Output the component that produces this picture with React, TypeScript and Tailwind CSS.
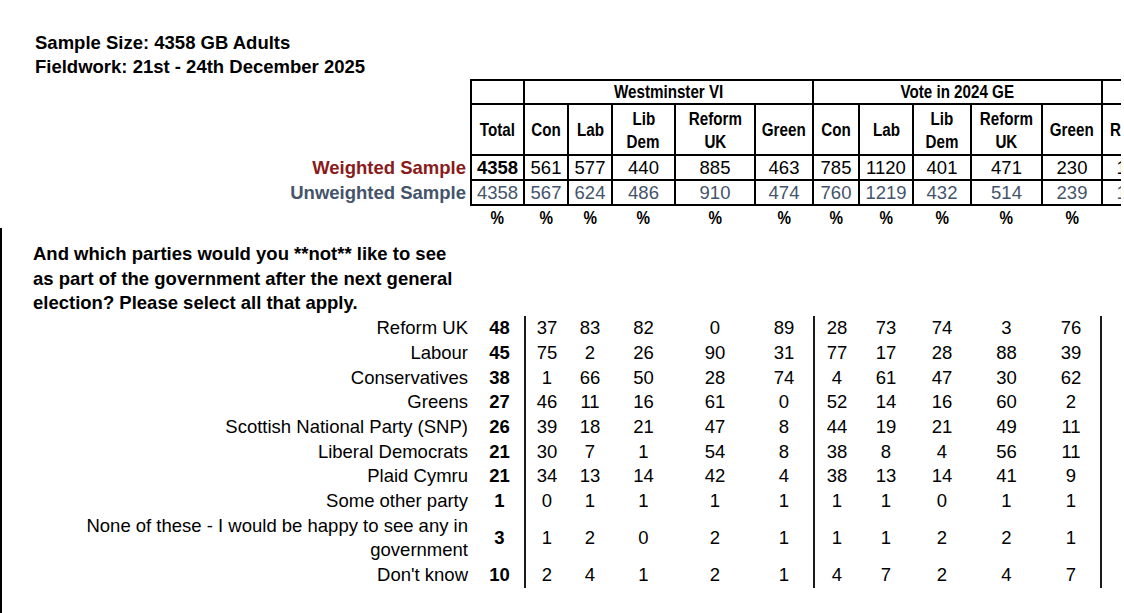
import React from 'react';

const nb = "inline-block font-bold scale-x-[0.82] origin-center";

const cols = [
  { w: 'w-[53px]', h: ['Total'], wt: '4358', uw: '4358' },
  { w: 'w-[44px]', h: ['Con'], wt: '561', uw: '567' },
  { w: 'w-[44px]', h: ['Lab'], wt: '577', uw: '624' },
  { w: 'w-[63px]', h: ['Lib', 'Dem'], wt: '440', uw: '486' },
  { w: 'w-[80px]', h: ['Reform', 'UK'], wt: '885', uw: '910' },
  { w: 'w-[58px]', h: ['Green'], wt: '463', uw: '474' },
  { w: 'w-[46px]', h: ['Con'], wt: '785', uw: '760' },
  { w: 'w-[54px]', h: ['Lab'], wt: '1120', uw: '1219' },
  { w: 'w-[58px]', h: ['Lib', 'Dem'], wt: '401', uw: '432' },
  { w: 'w-[71px]', h: ['Reform', 'UK'], wt: '471', uw: '514' },
  { w: 'w-[60px]', h: ['Green'], wt: '230', uw: '239' },
  { w: 'w-[70px]', h: ['Remain'], wt: '1612', uw: '1650' },
  { w: 'w-[70px]', h: ['Leave'], wt: '1745', uw: '1802' },
];

const rows: [string[], string, number[], number[]][] = [
  [['Reform UK'], '48', [37, 83, 82, 0, 89], [28, 73, 74, 3, 76]],
  [['Labour'], '45', [75, 2, 26, 90, 31], [77, 17, 28, 88, 39]],
  [['Conservatives'], '38', [1, 66, 50, 28, 74], [4, 61, 47, 30, 62]],
  [['Greens'], '27', [46, 11, 16, 61, 0], [52, 14, 16, 60, 2]],
  [['Scottish National Party (SNP)'], '26', [39, 18, 21, 47, 8], [44, 19, 21, 49, 11]],
  [['Liberal Democrats'], '21', [30, 7, 1, 54, 8], [38, 8, 4, 56, 11]],
  [['Plaid Cymru'], '21', [34, 13, 14, 42, 4], [38, 13, 14, 41, 9]],
  [['Some other party'], '1', [0, 1, 1, 1, 1], [1, 1, 0, 1, 1]],
  [['None of these - I would be happy to see any in', 'government'], '3', [1, 2, 0, 2, 1], [1, 1, 2, 2, 1]],
  [["Don't know"], '10', [2, 4, 1, 2, 1], [4, 7, 2, 4, 7]],
];

const cell = 'border-2 border-black text-center p-0';

export default function App() {
  return (
    <div className="w-[1124px] h-[613px] overflow-hidden bg-white text-black font-['Liberation_Sans',Arial,sans-serif] text-[18.5px]">
      {/* Top block */}
      <div className="h-[228px] w-[1121px] overflow-hidden">
        <div className="pl-[35px] pt-[31px] font-bold leading-[24px]">
          <div>Sample Size: 4358 GB Adults</div>
          <div>Fieldwork: 21st - 24th December 2025</div>
        </div>
        <table className="table-fixed border-collapse w-[1242px]">
          <colgroup>
            <col className="w-[471px]" />
            {cols.map((c, i) => (
              <col key={i} className={c.w} />
            ))}
          </colgroup>
          <tbody>
            <tr className="h-[24px]">
              <td className="p-0" />
              <td className={cell} />
              <td colSpan={5} className={`${cell} leading-[20px]`}>
                <span className={nb}>Westminster VI</span>
              </td>
              <td colSpan={5} className={`${cell} leading-[20px]`}>
                <span className={nb}>Vote in 2024 GE</span>
              </td>
              <td colSpan={2} className={`${cell} leading-[20px]`}>
                <span className={`${nb} pl-[30px]`}>EU Ref 2016</span>
              </td>
            </tr>
            <tr className="h-[51px]">
              <td className="p-0" />
              {cols.map((c, i) => (
                <td key={i} className={`${cell} leading-[23px]`}>
                  {c.h.map((t, j) => (
                    <div key={j}>
                      <span className={nb}>{t}</span>
                    </div>
                  ))}
                </td>
              ))}
            </tr>
            <tr className="h-[25px]">
              <td className="p-0 pr-[4px] text-right font-bold text-[#8b1a1a] leading-[21px]">Weighted Sample</td>
              {cols.map((c, i) => (
                <td key={i} className={`${cell} leading-[21px] ${i === 0 ? 'font-bold' : ''}`}>
                  {c.wt}
                </td>
              ))}
            </tr>
            <tr className="h-[25px]">
              <td className="p-0 pr-[4px] text-right font-bold text-[#44546a] leading-[21px]">Unweighted Sample</td>
              {cols.map((c, i) => (
                <td key={i} className={`${cell} leading-[21px] text-[#44546a]`}>
                  {c.uw}
                </td>
              ))}
            </tr>
            <tr className="h-[24px]">
              <td className="p-0" />
              {cols.map((c, i) => (
                <td key={i} className="p-0 text-center leading-[24px]">
                  <span className={nb}>%</span>
                </td>
              ))}
            </tr>
          </tbody>
        </table>
      </div>

      {/* Bottom block */}
      <div className="h-[385px] border-l-2 border-black">
        <div className="pl-[31px] pt-[14px] font-bold leading-[24.7px]">
          And which parties would you **not** like to see
          <br />
          as part of the government after the next general
          <br />
          election? Please select all that apply.
        </div>
        <div className="grid grid-cols-[469px_53px_44px_44px_63px_80px_58px_46px_54px_58px_71px_60px] leading-[24.7px]">
          {rows.map(([label, total, w, v], r) => (
            <React.Fragment key={r}>
              <div className="text-right pr-[3px]">
                {label.map((l, j) => (
                  <div key={j}>{l}</div>
                ))}
              </div>
              <div className="flex items-center justify-center pl-[4px] font-bold">{total}</div>
              {w.map((n, i) => (
                <div
                  key={`w${i}`}
                  className={`flex items-center justify-center ${i === 0 ? 'border-l-2 border-[#1a1a1a]' : ''}`}
                >
                  {n}
                </div>
              ))}
              {v.map((n, i) => (
                <div
                  key={`v${i}`}
                  className={`flex items-center justify-center ${i === 0 ? 'border-l-2 border-[#1a1a1a]' : ''} ${
                    i === 4 ? 'border-r-2 border-[#1a1a1a]' : ''
                  }`}
                >
                  {n}
                </div>
              ))}
            </React.Fragment>
          ))}
        </div>
      </div>
    </div>
  );
}
